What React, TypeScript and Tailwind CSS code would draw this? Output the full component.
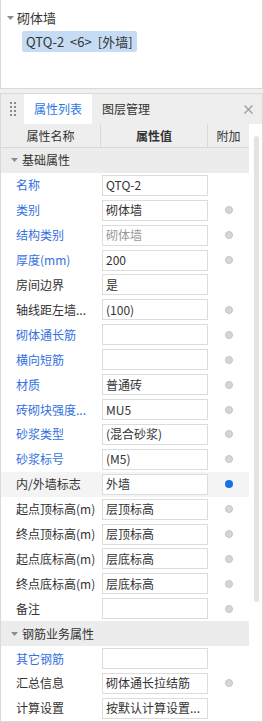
import React from "react";

type Row = {
  label: string;
  value: string;
  blue?: boolean;
  dot?: "gray" | "blue" | null;
  muted?: boolean;
  selected?: boolean;
};

const basic: Row[] = [
  { label: "名称", value: "QTQ-2", blue: true, dot: null },
  { label: "类别", value: "砌体墙", blue: true, dot: "gray" },
  { label: "结构类别", value: "砌体墙", blue: true, dot: "gray", muted: true },
  { label: "厚度(mm)", value: "200", blue: true, dot: "gray" },
  { label: "房间边界", value: "是", dot: null },
  { label: "轴线距左墙...", value: "(100)", dot: "gray" },
  { label: "砌体通长筋", value: "", blue: true, dot: "gray" },
  { label: "横向短筋", value: "", blue: true, dot: "gray" },
  { label: "材质", value: "普通砖", blue: true, dot: "gray" },
  { label: "砖砌块强度...", value: "MU5", blue: true, dot: "gray" },
  { label: "砂浆类型", value: "(混合砂浆)", blue: true, dot: "gray" },
  { label: "砂浆标号", value: "(M5)", blue: true, dot: "gray" },
  { label: "内/外墙标志", value: "外墙", dot: "blue", selected: true },
  { label: "起点顶标高(m)", value: "层顶标高", dot: "gray" },
  { label: "终点顶标高(m)", value: "层顶标高", dot: "gray" },
  { label: "起点底标高(m)", value: "层底标高", dot: "gray" },
  { label: "终点底标高(m)", value: "层底标高", dot: "gray" },
  { label: "备注", value: "", dot: "gray" },
];

const rebar: Row[] = [
  { label: "其它钢筋", value: "", blue: true, dot: null },
  { label: "汇总信息", value: "砌体通长拉结筋", dot: "gray" },
  { label: "计算设置", value: "按默认计算设置...", dot: null },
];

function Caret() {
  return (
    <svg width="7" height="4" viewBox="0 0 7 4" className="shrink-0">
      <path d="M0 0h7L3.5 4z" fill="#8c8c8c" />
    </svg>
  );
}

function Section({ title }: { title: string }) {
  return (
    <div className="h-[25px] bg-[#ececec] flex items-center gap-[4px] pl-[10px] text-[12px] text-[#333]">
      <Caret />
      <span>{title}</span>
    </div>
  );
}

function PropRow({ row }: { row: Row }) {
  return (
    <div
      className={`h-[25px] grid grid-cols-[101px_106px_41px] items-center ${
        row.selected ? "bg-[#f4f4f4]" : "bg-white"
      }`}
    >
      <span
        className={`pl-[15px] text-[12px] whitespace-nowrap ${
          row.blue ? "text-[#3370e0]" : "text-[#333]"
        }`}
      >
        {row.label}
      </span>
      <div
        className={`h-[21px] bg-white border border-[#dcdcdc] flex items-center pl-[3px] text-[12px] whitespace-nowrap overflow-hidden ${
          row.muted ? "text-[#9a9a9a]" : "text-[#333]"
        }`}
      >
        {row.value}
      </div>
      <div className="flex justify-center pl-[1px]">
        {row.dot === "gray" && (
          <span className="w-[8px] h-[8px] rounded-full bg-[#d6d6d6] border border-[#c4c4c4]" />
        )}
        {row.dot === "blue" && (
          <span className="w-[8px] h-[8px] rounded-full bg-[#1a6fe6]" />
        )}
      </div>
    </div>
  );
}

export default function App() {
  return (
    <div
      className="w-[263px] h-[722px] bg-[#f0f0f0] flex flex-col gap-[4px] overflow-hidden"
      style={{ fontFamily: '"Noto Sans CJK SC", "Noto Sans", sans-serif' }}
    >
      {/* component tree */}
      <div className="h-[89px] shrink-0 bg-white border border-t-0 border-[#d9d9d9] pt-[9px]">
        <div className="flex items-center gap-[3px] pl-[6px] text-[13px] text-[#333] leading-[18px]">
          <Caret />
          <span>砌体墙</span>
        </div>
        <div className="mt-[4px] ml-[21px] inline-flex items-center gap-[6px] h-[21px] px-[4px] rounded-[2px] bg-[#c5dcf4] text-[13px] text-[#333] whitespace-pre">
          <span>QTQ-2</span>
          <span>{"<6>"}</span>
          <span>[外墙]</span>
        </div>
      </div>

      {/* property panel */}
      <div className="flex-1 bg-white border border-[#d9d9d9] flex flex-col min-h-0">
        <div className="h-[30px] shrink-0 bg-[#eeeeee] flex items-stretch">
          <div className="w-[23px] flex items-center justify-center">
            <div className="grid grid-cols-2 gap-x-[2px] gap-y-[2px]">
              {Array.from({ length: 8 }).map((_, i) => (
                <span key={i} className="w-[2px] h-[2px] bg-[#8a8a8a]" />
              ))}
            </div>
          </div>
          <div className="w-[68px] bg-white flex items-center justify-center text-[12px] text-[#2b78e4]">
            属性列表
          </div>
          <div className="px-[10px] flex items-center text-[12px] text-[#333]">图层管理</div>
          <div className="flex-1" />
          <div className="w-[24px] flex items-center justify-center pr-[4px]">
            <svg width="9" height="9" viewBox="0 0 9 9">
              <path d="M0.5 0.5l8 8M8.5 0.5l-8 8" stroke="#999" strokeWidth="1.1" />
            </svg>
          </div>
        </div>

        <div className="flex flex-1 min-h-0">
          <div className="w-[248px] flex flex-col">
            <div className="h-[24px] shrink-0 bg-[#eeeeee] grid grid-cols-[100px_107px_41px] border-b border-[#d9d9d9] text-[12px] text-[#333]">
              <div className="flex items-center justify-center border-r border-[#d9d9d9]">属性名称</div>
              <div className="flex items-center justify-center border-r border-[#d9d9d9] font-bold">属性值</div>
              <div className="flex items-center justify-center">附加</div>
            </div>
            <Section title="基础属性" />
            {basic.map((r) => (
              <PropRow key={r.label} row={r} />
            ))}
            <Section title="钢筋业务属性" />
            {rebar.map((r) => (
              <PropRow key={r.label} row={r} />
            ))}
          </div>
          <div className="flex-1 flex justify-center pt-[12px] pl-[1px]">
            <div className="w-[5px] h-[466px] rounded-full bg-[#e3e3e3]" />
          </div>
        </div>
      </div>
    </div>
  );
}
